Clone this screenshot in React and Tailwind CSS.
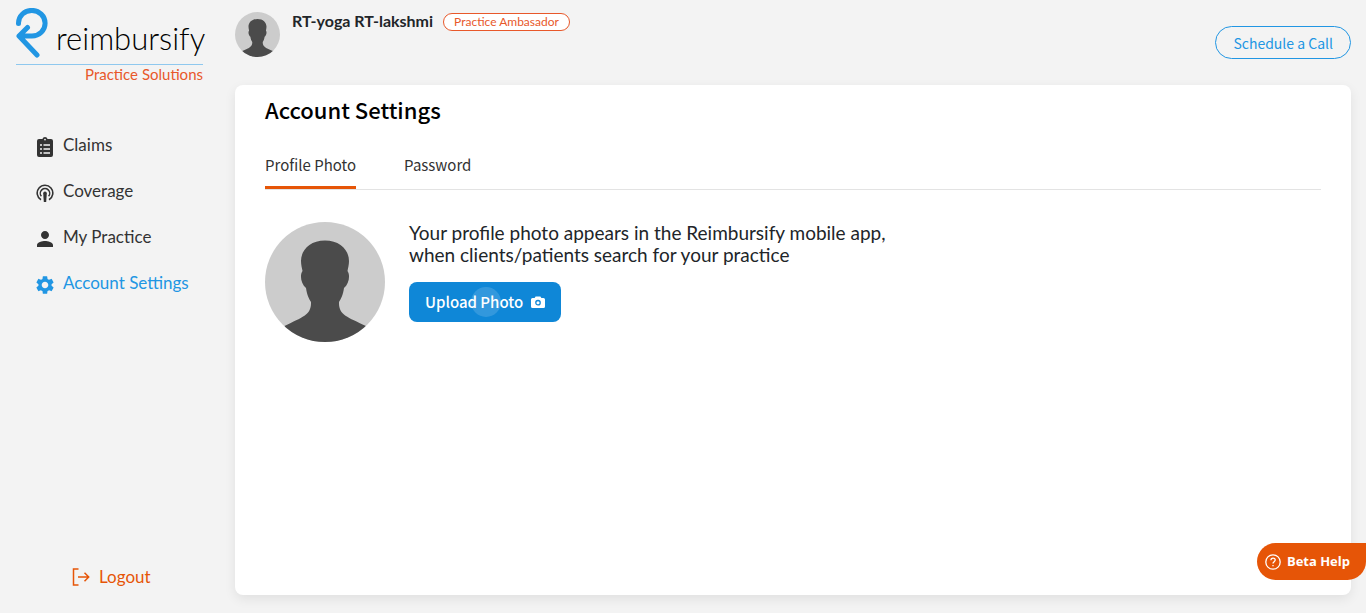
import { MdPerson, MdSettings } from "react-icons/md";

function ClipboardIcon() {
  return (
    <svg viewBox="0 0 16 20" className="h-5 w-4" fill="none" aria-hidden="true">
      <path d="M2 2h3.4a2.7 2.7 0 0 1 5.2 0H14a2 2 0 0 1 2 2v14a2 2 0 0 1-2 2H2a2 2 0 0 1-2-2V4a2 2 0 0 1 2-2z" fill="#333333" />
      <circle cx="8" cy="2.6" r="0.9" fill="#f3f3f3" />
      <path d="M3 8h2M3 12h2M3 16h2M6.500 8h6.500M6.500 12h6.500M6.500 16h6.500" stroke="#f3f3f3" strokeWidth="1.3" />
    </svg>
  );
}

function CoverageIcon() {
  return (
    <svg viewBox="0 0 18 18" className="size-[18px]" fill="none" stroke="#333333" aria-hidden="true">
      <path d="M5 15.700A7.800 7.800 0 1 1 13 15.700" strokeWidth="1.6" />
      <path d="M5.400 12.300A4.700 4.700 0 1 1 12.600 12.300" strokeWidth="1.5" />
      <path d="M7.200 9.300a1.800 1.800 0 1 1 3.600 0L10.200 18H7.800z" fill="#333333" stroke="none" />
    </svg>
  );
}

function CameraIcon() {
  return (
    <svg viewBox="0 0 14 12" className="h-3 w-3.5" aria-hidden="true">
      <path d="M1.500 2H3.600L4.600 .4H9.400L10.400 2H12.500A1.500 1.500 0 0 1 14 3.500V10.500A1.500 1.500 0 0 1 12.500 12H1.500A1.500 1.500 0 0 1 0 10.500V3.500A1.500 1.500 0 0 1 1.500 2z" fill="#ffffff" />
      <circle cx="7" cy="6.700" r="2.200" fill="#ffffff" stroke="#0f87d7" strokeWidth="1.300" />
    </svg>
  );
}

function LogoutIcon() {
  return (
    <svg viewBox="0 0 18 18" className="size-[18px]" fill="none" stroke="#e65507" strokeWidth="1.500" aria-hidden="true">
      <path d="M6.500 1H1.500V17H6.500M6 9H16.500M12.500 4.800L16.700 9L12.500 13.200" />
    </svg>
  );
}

function HelpIcon() {
  return (
    <svg viewBox="0 0 16 16" className="size-4" fill="none" stroke="#ffffff" strokeWidth="1.300" aria-hidden="true">
      <circle cx="8" cy="8" r="7.200" />
      <path d="M5.900 6.300C5.900 3.400 10.200 3.400 10.200 6.100C10.200 7.700 8 7.700 8 9.500M8 10.900V12.200" />
    </svg>
  );
}

function Avatar({ className }) {
  return (
    <span className={className}>
      <svg viewBox="0 0 120 120" className="size-full" role="img" aria-label="Profile photo">
        <rect width="120" height="120" fill="#cccccc" />
        <path d="M60 18.500C45 18.500 36 28 36 39C36 43 37 46 37.500 49C34.500 53 36 62 41 66C42 73 44 77 46 80C46.500 93 38 95 19.500 104V120H101V104C82 95 73.500 93 74 80C76 77 78 73 79 66C84 62 85.500 53 82.500 49C83 46 84 43 84 39C84 28 75 18.500 60 18.500z" fill="#4b4b4b" />
      </svg>
    </span>
  );
}

function Logo() {
  return (
    <a href="#home" aria-label="reimbursify Practice Solutions" className="block w-[187px] pt-2">
      <span className="flex h-[57px] border-b border-solid border-b-[#8fc8ee]">
        <svg viewBox="0 0 32 50" className="h-[50px] w-8 shrink-0" fill="none" stroke="#2196e3" strokeWidth="5" strokeLinecap="round" strokeLinejoin="round" aria-hidden="true">
          <path d="M2.500 15.500V15A13.300 12.800 0 1 1 16 28H3L21 47M3 28L11.500 19.500" />
        </svg>
        <span className="pt-3 pl-2 font-['Lato','Noto_Sans',sans-serif] text-[31px] leading-9 font-light text-black">reimbursify</span>
      </span>
      <span className="block text-right text-[15px] leading-[18px] text-[#e8582a]">Practice Solutions</span>
    </a>
  );
}

const links = [
  { label: "Claims", icon: <ClipboardIcon /> },
  { label: "Coverage", icon: <CoverageIcon /> },
  { label: "My Practice", icon: <MdPerson className="size-6 shrink-0 text-[#333333]" /> },
  { label: "Account Settings", icon: <MdSettings className="size-[22px] shrink-0" />, active: true },
];

export default function App() {
  return (
    <div className="flex min-h-screen bg-[#f3f3f3] font-['Lato','Noto_Sans',sans-serif] text-[#212529]">
      <aside className="flex w-[235px] shrink-0 flex-col pb-6 pl-4">
        <Logo />
        <nav className="mt-[50px] flex flex-col gap-[22px] pl-[17px]">
          {links.map((link) => (
            <a key={link.label} href="#" className={link.active ? "flex h-6 items-center gap-1.5 text-[17px] text-[#2196e3]" : "flex h-6 items-center gap-1.5 text-[17px] text-[#333333]"}>
              <span className="flex w-6 justify-center pt-1">{link.icon}</span>
              {link.label}
            </a>
          ))}
        </nav>
        <button type="button" className="mt-auto ml-14 flex items-center gap-[9px] self-start text-[17px] leading-6 text-[#e65507]">
          <LogoutIcon />
          Logout
        </button>
      </aside>

      <div className="flex min-w-0 flex-1 flex-col pr-[15px] pb-[18px]">
        <header className="flex h-[85px] items-start">
          <Avatar className="mt-3 size-[45px] shrink-0 overflow-hidden rounded-full" />
          <span className="mt-[9px] ml-3 text-base leading-6 font-bold">RT-yoga RT-lakshmi</span>
          <span className="mt-[13px] ml-2.5 h-[18px] rounded-full border border-[#e8582a] bg-white px-2.5 text-xs leading-4 text-[#e8582a]">Practice Ambasador</span>
          <button type="button" className="mt-[26px] ml-auto h-[33px] rounded-full border border-[#2196e3] px-[17px] font-['Noto_Sans_CJK_SC',sans-serif] text-sm leading-none text-[#2196e3]">Schedule a Call</button>
        </header>

        <main className="flex-1 rounded-lg bg-white px-[30px] shadow-[0_4px_12px_rgba(0,0,0,0.08)]">
          <h1 className="pt-2 font-['Noto_Sans_CJK_SC',sans-serif] text-[22px] leading-8 font-medium text-black">Account Settings</h1>
          <div role="tablist" className="mt-7 flex h-[37px] gap-12 border-b border-[#e3e3e3] font-['Noto_Sans_CJK_SC',sans-serif] text-[15px] leading-6 text-[#333333]">
            <button type="button" role="tab" aria-selected="true" className="flex items-start border-b-3 border-[#e65507]">Profile Photo</button>
            <button type="button" role="tab" aria-selected="false" className="flex items-start">Password</button>
          </div>
          <section className="flex gap-6 pt-8">
            <Avatar className="size-[120px] shrink-0 overflow-hidden rounded-full" />
            <div>
              <p className="text-[19px] leading-[22px]">
                Your profile photo appears in the Reimbursify mobile app,
                <br />
                when clients/patients search for your practice
              </p>
              <button type="button" className="relative mt-4 flex h-10 items-center gap-2 rounded-lg bg-[#0f87d7] px-4 font-['Noto_Sans_CJK_SC',sans-serif] text-[15px] font-medium text-white">
                Upload Photo
                <CameraIcon />
                <span className="absolute top-[5px] left-[62px] size-[30px] rounded-full bg-white/15" />
              </button>
            </div>
          </section>
        </main>
      </div>

      <button type="button" className="fixed right-0 bottom-[33px] flex h-[37px] items-center gap-1.5 rounded-l-full rounded-br-full bg-[#e65507] pr-4 pl-2 font-['Open_Sans',sans-serif] text-[13px] font-bold text-white">
        <HelpIcon />
        Beta Help
      </button>
    </div>
  );
}
